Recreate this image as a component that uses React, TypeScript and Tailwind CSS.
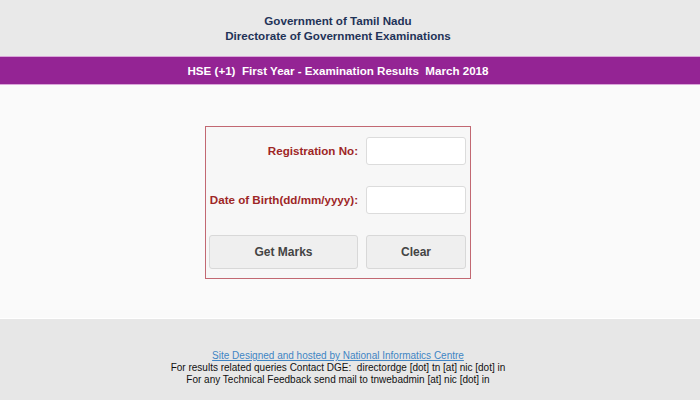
export default function App() {
  const font = { fontFamily: '"Liberation Sans", Arial, sans-serif' };
  return (
    <div className="w-[700px] h-[400px] flex flex-col bg-[#fafafa] overflow-hidden" style={font}>
      {/* Header */}
      <div className="h-[56px] bg-[#e9e9e9] flex flex-col items-center justify-center pr-[24px] text-[#1f3358] font-bold text-[11.6px] leading-[15px]">
        <div>Government of Tamil Nadu</div>
        <div>Directorate of Government Examinations</div>
      </div>

      {/* Title band */}
      <div className="h-[29px] bg-[#942494] border-y border-[#d9a6d9] flex items-center justify-center pr-[24px] text-white font-bold text-[11.6px]">
        <span className="whitespace-pre">HSE (+1)  First Year - Examination Results  March 2018</span>
      </div>

      {/* Form */}
      <div className="flex-1 flex justify-center pt-[41px] pr-[24px]">
        <div className="w-[266px] h-[153px] border border-[#c26872] bg-[#f7f7f7] px-[3px] pt-[10px]">
          <div className="grid grid-cols-[149px_100px] gap-x-[8px] gap-y-[21px] items-center">
            <label className="text-right font-bold text-[11.6px] text-[#9e2626]">Registration No:</label>
            <input className="h-[28px] bg-white border border-[#dcdcdc] rounded-[3px] outline-none" />
            <label className="text-right font-bold text-[11.6px] text-[#9e2626] whitespace-nowrap">Date of Birth(dd/mm/yyyy):</label>
            <input className="h-[28px] bg-white border border-[#dcdcdc] rounded-[3px] outline-none" />
            <button className="h-[34px] bg-[#efefef] border border-[#d8d8d8] rounded-[3px] font-bold text-[12px] text-[#444]">
              Get Marks
            </button>
            <button className="h-[34px] bg-[#efefef] border border-[#d8d8d8] rounded-[3px] font-bold text-[12px] text-[#444]">
              Clear
            </button>
          </div>
        </div>
      </div>

      {/* Footer */}
      <div className="h-[82px] bg-[#e7e7e7] border-t border-white flex flex-col items-center pt-[31px] pr-[24px] text-[10px] leading-[12px]">
        <a href="#" className="text-[#3f85c4] underline">Site Designed and hosted by National Informatics Centre</a>
        <div className="text-[#111] whitespace-pre">For results related queries Contact DGE:  directordge [dot] tn [at] nic [dot] in</div>
        <div className="text-[#111]">For any Technical Feedback send mail to tnwebadmin [at] nic [dot] in</div>
      </div>
    </div>
  );
}
